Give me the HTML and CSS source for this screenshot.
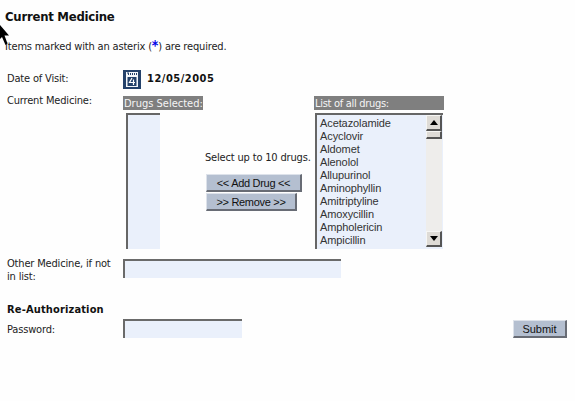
FILE: index.html
```html
<!DOCTYPE html>
<html lang="en">
<head>
<meta charset="utf-8">
<title>Current Medicine</title>
<link rel="stylesheet" href="styles.css">
</head>
<body>
<svg class="cursor" width="14" height="26" viewBox="0 0 14 26"><path d="M0 4L9 14.500L4.500 14.500L7.500 22.500L5.500 24L2 16L0 18Z" fill="#000"/></svg>
<main>
  <h1><span>Current Medicine</span></h1>
  <p class="intro">Items marked with an asterix (<b>*</b>) are required.</p>
  <form>
    <div class="row visit">
      <label>Date of Visit:</label>
      <div class="date">
        <svg width="18" height="19" viewBox="0 0 18 19"><path fill="#24426b" d="M0 0h18v19H0z"/><path fill="#f4f7fb" d="M3 2h12v15H3z"/><path d="M4 3h2M5.500 3v2M7.500 3v2M9.500 3v2M11.500 3v2M13.500 3v2" fill="none" stroke="#24426b"/><path fill="#24426b" d="M4.500 7h9v9h-9z"/><path d="M9 8L6.500 12.500h5.500M10.500 9.500v5.500" fill="none" stroke="#fff" stroke-width="1.200"/></svg>
        <strong>12/05/2005</strong>
      </div>
    </div>
    <div class="row medicine">
      <label>Current Medicine:</label>
      <div class="picker">
        <section class="chosen"><h2>Drugs Selected:</h2><div class="list"></div></section>
        <div class="actions">
          <p>Select up to 10 drugs.</p>
          <button type="button" class="add">&lt;&lt; Add Drug &lt;&lt;</button>
          <button type="button" class="remove">&gt;&gt; Remove &gt;&gt;</button>
        </div>
        <section class="all">
          <h2>List of all drugs:</h2>
          <div class="list">
            <ul><li>Acetazolamide</li><li>Acyclovir</li><li>Aldomet</li><li>Alenolol</li><li>Allupurinol</li><li>Aminophyllin</li><li>Amitriptyline</li><li>Amoxycillin</li><li>Ampholericin</li><li>Ampicillin</li></ul>
            <div class="scroll">
              <span class="arrow"><svg width="8" height="5" viewBox="0 0 8 5"><path d="M0 5L4 0L8 5Z"/></svg></span>
              <span class="thumb"></span>
              <span class="arrow down"><svg width="8" height="5" viewBox="0 0 8 5"><path d="M0 0L4 5L8 0Z"/></svg></span>
            </div>
          </div>
        </section>
      </div>
    </div>
    <div class="row other"><label>Other Medicine, if not<br>in list:</label><input type="text" class="wide"></div>
    <h3><span>Re-Authorization</span></h3>
    <div class="row password"><label>Password:</label><input type="password"><button type="button" class="submit">Submit</button></div>
  </form>
</main>
</body>
</html>
```

FILE: styles.css
```css
* { box-sizing: border-box; }
body { margin: 0; background: #fefefe; color: #222; font: 11px/13px "DejaVu Sans Condensed", "DejaVu Sans", sans-serif; font-stretch: condensed; letter-spacing: -0.17px; overflow: hidden; }
main { padding: 8px 8px 0 7px; }
h1, h2, h3, p, ul { margin: 0; padding: 0; font-weight: normal; }
h1 { margin-left: -2px; font-size: 13px; line-height: 18px; font-weight: bold; color: #111; white-space: nowrap; letter-spacing: -0.25px; }
.intro { margin: 14px 0 0 -2px; white-space: nowrap; }
.intro b { color: #0000e8; font-size: 14px; line-height: 10px; }
.cursor { position: absolute; left: 0; top: 21px; }
.row { display: grid; grid-template-columns: 116px 1fr; white-space: nowrap; }
.visit { margin-top: 17px; height: 25px; }
.visit label { padding-top: 2px; }
.medicine label { margin-top: -1px; }
.date { display: flex; gap: 6px; }
.date strong { padding-top: 2px; font-size: 11px; letter-spacing: 0.5px; color: #111; }
.picker { display: flex; height: 154px; }
.chosen { width: 80px; }
h2 { height: 14px; margin-top: 1px; padding: 1px 0 0 1px; background: #7f7f7f; color: #f5f5f5; font-size: 11px; line-height: 14px; }
.chosen h2 { letter-spacing: 0; }
.all h2 { letter-spacing: -0.3px; }
.list { height: 136px; margin-top: 3px; background: #eaf0fb; border-top: 2px solid #666; border-left: 2px solid #666; }
.chosen .list { width: 34px; margin-left: 3px; }
.actions { width: 111px; padding: 56px 0 0 2px; display: flex; flex-direction: column; align-items: flex-start; }
.actions p { margin-bottom: 10px; }
button { height: 18px; padding: 0; background: #b4bfd0; color: #111; border: 1px solid; border-color: #dde2ea #686c75 #686c75 #dde2ea; border-right-width: 2px; border-bottom-width: 2px; font: 11px/14px "Liberation Sans", sans-serif; letter-spacing: -0.3px; white-space: nowrap; }
.add { width: 96px; margin-left: 1px; }
.remove { width: 91px; margin: 1px 0 0 1px; }
.all { width: 130px; }
.all .list { width: 128px; margin-left: 1px; display: flex; justify-content: space-between; }
ul { list-style: none; padding: 2px 0 0 3px; font: 11px/13px "Liberation Sans", sans-serif; letter-spacing: -0.1px; color: #333; }
.scroll { width: 16px; height: 132px; margin-right: 1px; background: #eeedeb; display: flex; flex-direction: column; }
.arrow, .thumb { background: #dedbd6; border: 1px solid; border-color: #f6f6f4 #555 #555 #f6f6f4; border-right-width: 2px; border-bottom-width: 2px; }
.arrow { height: 16px; display: flex; align-items: center; justify-content: center; }
.thumb { height: 8px; }
.down { margin-top: auto; }
.other { margin-top: 8px; height: 46px; }
input { width: 119px; height: 19px; padding: 0; background: #eaf0fb; border: 0; border-top: 2px solid #6a6a6a; border-left: 2px solid #6a6a6a; }
.wide { width: 218px; margin-top: 2px; }
h3 { font-size: 11px; line-height: 13px; font-weight: bold; color: #111; white-space: nowrap; letter-spacing: 0.15px; }
.password { grid-template-columns: 116px 390px 54px; margin-top: 3px; }
.password label { padding-top: 4px; }
.submit { width: 54px; height: 18px; margin-top: 1px; letter-spacing: 0; }
```
